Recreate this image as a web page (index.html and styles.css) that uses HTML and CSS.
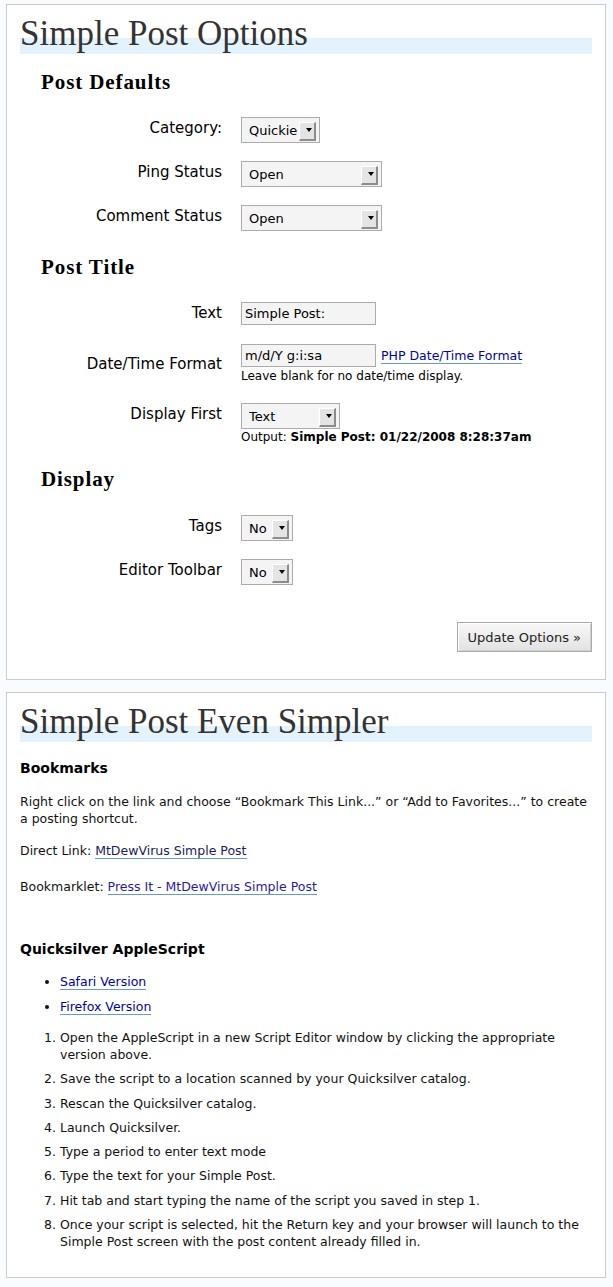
FILE: index.html
```html
<!DOCTYPE html>
<html lang="en">
<head>
<meta charset="utf-8">
<title>Simple Post Options</title>
<link rel="stylesheet" href="styles.css">
</head>
<body>
<div class="wrap">
  <h2 class="title">Simple Post Options</h2>
  <form class="opts">
    <h3 class="sec">Post Defaults</h3>
    <div class="fields">
      <div class="row">
        <label class="lbl" for="cat">Category:</label>
        <span class="select w-cat"><select id="cat"><option>Quickie</option></select></span>
      </div>
      <div class="row">
        <label class="lbl" for="ping">Ping Status</label>
        <span class="select w-wide"><select id="ping"><option>Open</option></select></span>
      </div>
      <div class="row">
        <label class="lbl" for="comment">Comment Status</label>
        <span class="select w-wide"><select id="comment"><option>Open</option></select></span>
      </div>
    </div>

    <h3 class="sec sec-next">Post Title</h3>
    <div class="fields loose">
      <div class="row">
        <label class="lbl" for="ttext">Text</label>
        <input class="txt" id="ttext" type="text" value="Simple Post:">
      </div>
      <div class="row">
        <label class="lbl lbl-mid" for="tfmt">Date/Time Format</label>
        <div class="ctrl">
          <div class="inline">
            <input class="txt" id="tfmt" type="text" value="m/d/Y g:i:sa">
            <a href="#" class="lnk">PHP Date/Time Format</a>
          </div>
          <div class="help">Leave blank for no date/time display.</div>
        </div>
      </div>
      <div class="row">
        <label class="lbl" for="first">Display First</label>
        <div class="ctrl">
          <span class="select w-mid"><select id="first"><option>Text</option></select></span>
          <div class="output">Output: <strong>Simple Post: 01/22/2008 8:28:37am</strong></div>
        </div>
      </div>
    </div>

    <h3 class="sec sec-display">Display</h3>
    <div class="fields fields-display">
      <div class="row">
        <label class="lbl" for="tags">Tags</label>
        <span class="select w-narrow"><select id="tags"><option>No</option></select></span>
      </div>
      <div class="row">
        <label class="lbl" for="toolbar">Editor Toolbar</label>
        <span class="select w-narrow"><select id="toolbar"><option>No</option></select></span>
      </div>
    </div>

    <div class="actions">
      <button type="button" class="btn">Update Options »</button>
    </div>
  </form>
</div>

<div class="wrap wrap-second">
  <h2 class="title">Simple Post Even Simpler</h2>
  <div class="content">
    <h3 class="sub">Bookmarks</h3>
    <p class="intro">Right click on the link and choose “Bookmark This Link...” or “Add to Favorites...” to create a posting shortcut.</p>
    <p class="direct">Direct Link: <a href="#" class="lnk lnk-dark">MtDewVirus Simple Post</a></p>
    <p class="bm">Bookmarklet: <a href="#" class="lnk lnk-visited">Press It - MtDewVirus Simple Post</a></p>

    <h3 class="sub sub-qs">Quicksilver AppleScript</h3>
    <ul class="versions">
      <li><a href="#" class="lnk">Safari Version</a></li>
      <li><a href="#" class="lnk">Firefox Version</a></li>
    </ul>
    <ol class="steps">
      <li>Open the AppleScript in a new Script Editor window by clicking the appropriate version above.</li>
      <li>Save the script to a location scanned by your Quicksilver catalog.</li>
      <li>Rescan the Quicksilver catalog.</li>
      <li>Launch Quicksilver.</li>
      <li>Type a period to enter text mode</li>
      <li>Type the text for your Simple Post.</li>
      <li>Hit tab and start typing the name of the script you saved in step 1.</li>
      <li>Once your script is selected, hit the Return key and your browser will launch to the Simple Post screen with the post content already filled in.</li>
    </ol>
  </div>
</div>
</body>
</html>
```

FILE: styles.css
```css
* {
  box-sizing: border-box;
}

html,
body {
  margin: 0;
  padding: 0;
}

body {
  background: #f9fcfe;
  font-family: "DejaVu Sans", "Liberation Sans", sans-serif;
  color: #000;
  padding-top: 4px;
}

.wrap {
  width: 600px;
  margin: 0 0 0 6px;
  background: #fff;
  border: 1px solid #cccccc;
  padding: 0 13px 27px;
}

.wrap-second {
  margin-top: 12px;
}

.title {
  margin: 25px 0 0;
  padding: 0;
  height: 8px;
  line-height: 8px;
  font-family: "Liberation Serif", "Times New Roman", serif;
  font-size: 35px;
  font-weight: normal;
  color: #333;
  border-bottom: 16px solid #e4f2fd;
  box-sizing: content-box;
  white-space: nowrap;
}

/* ---------- Options form ---------- */

.opts {
  margin: 0;
}

.sec {
  margin: 16px 0 0 21px;
  font-family: "Liberation Serif", "Times New Roman", serif;
  font-size: 21px;
  line-height: 24px;
  font-weight: bold;
  letter-spacing: 0.9px;
  color: #000;
}

.sec-next {
  margin-top: 24px;
}

.sec-display {
  margin-top: 22px;
}

.fields {
  display: flex;
  flex-direction: column;
  gap: 18px;
  margin-top: 23px;
}

.fields.loose {
  gap: 19px;
}

.fields-display {
  margin-top: 24px;
}

.row {
  display: grid;
  grid-template-columns: 202px 1fr;
  column-gap: 19px;
  align-items: start;
}

.lbl {
  text-align: right;
  font-size: 15px;
  line-height: 18px;
  padding-top: 2px;
  color: #000;
}

.lbl-mid {
  padding-top: 11px;
}

.ctrl {
  display: flex;
  flex-direction: column;
  align-items: flex-start;
}

.inline {
  display: flex;
  align-items: baseline;
  gap: 5px;
}

.select {
  position: relative;
  display: inline-block;
  height: 26px;
  justify-self: start;
}

.select select {
  display: block;
  appearance: none;
  -webkit-appearance: none;
  width: 100%;
  height: 26px;
  margin: 0;
  padding: 0 0 0 7px;
  border: 1px solid #ababab;
  border-radius: 0;
  background: #f4f4f4;
  font-family: "DejaVu Sans", sans-serif;
  font-size: 13px;
  line-height: 15px;
  color: #000;
}

.select::after {
  content: "";
  position: absolute;
  right: 4px;
  top: 5px;
  width: 14px;
  height: 16px;
  background: #e4e4e4;
  border-top: 1px solid #fff;
  border-left: 1px solid #fff;
  border-right: 2px solid #8c8c8c;
  border-bottom: 2px solid #8c8c8c;
  pointer-events: none;
}

.select::before {
  content: "";
  position: absolute;
  right: 8px;
  top: 11px;
  width: 0;
  height: 0;
  border-left: 3.5px solid transparent;
  border-right: 3.5px solid transparent;
  border-top: 4px solid #000;
  z-index: 1;
  pointer-events: none;
}

.w-cat {
  width: 79px;
}

.w-wide {
  width: 141px;
}

.w-mid {
  width: 99px;
}

.w-narrow {
  width: 52px;
}

.txt {
  display: block;
  width: 135px;
  height: 23px;
  margin: 0;
  padding: 0 3px;
  border: 1px solid #ababab;
  border-radius: 0;
  background: #f4f4f4;
  font-family: "DejaVu Sans", sans-serif;
  font-size: 13px;
  color: #000;
}

.help {
  margin-top: 2px;
  font-size: 12px;
  line-height: 15px;
  color: #000;
}

.output {
  margin-top: 1px;
  font-size: 12px;
  line-height: 15px;
  color: #000;
}

.lnk {
  color: #00019b;
  text-decoration: none;
  border-bottom: 1px solid #6699cc;
  font-size: 12.5px;
}

.lnk-dark {
  color: #1a1a5e;
}

.lnk-visited {
  color: #2a1a9a;
}

.actions {
  display: flex;
  justify-content: flex-end;
  margin-top: 37px;
}

.btn {
  height: 30px;
  margin: 0;
  padding: 0 10px;
  font-family: "DejaVu Sans", sans-serif;
  font-size: 13px;
  color: #222;
  border: 1px solid #a9a9a9;
  border-radius: 0;
  background: linear-gradient(#f8f8f8, #e2e2e2);
  box-shadow: inset 1px 1px 0 #fff, inset -1px -1px 0 #d0d0d0;
}

/* ---------- Even simpler ---------- */

.content {
  font-size: 12.5px;
  line-height: 17px;
  color: #111;
}

.sub {
  margin: 18px 0 0;
  font-size: 14px;
  line-height: 17px;
  font-weight: bold;
  color: #000;
}

.sub-qs {
  margin-top: 46px;
}

.content p {
  margin: 0;
}

.content .intro {
  margin-top: 16px;
}

.content .direct {
  margin-top: 15px;
}

.content .bm {
  margin-top: 19px;
}

.versions {
  margin: 15px 0 0;
  padding-left: 40px;
}

.versions li + li {
  margin-top: 8px;
}

.steps {
  margin: 14px 0 0;
  padding-left: 40px;
}

.steps li + li {
  margin-top: 7.3px;
}
```
